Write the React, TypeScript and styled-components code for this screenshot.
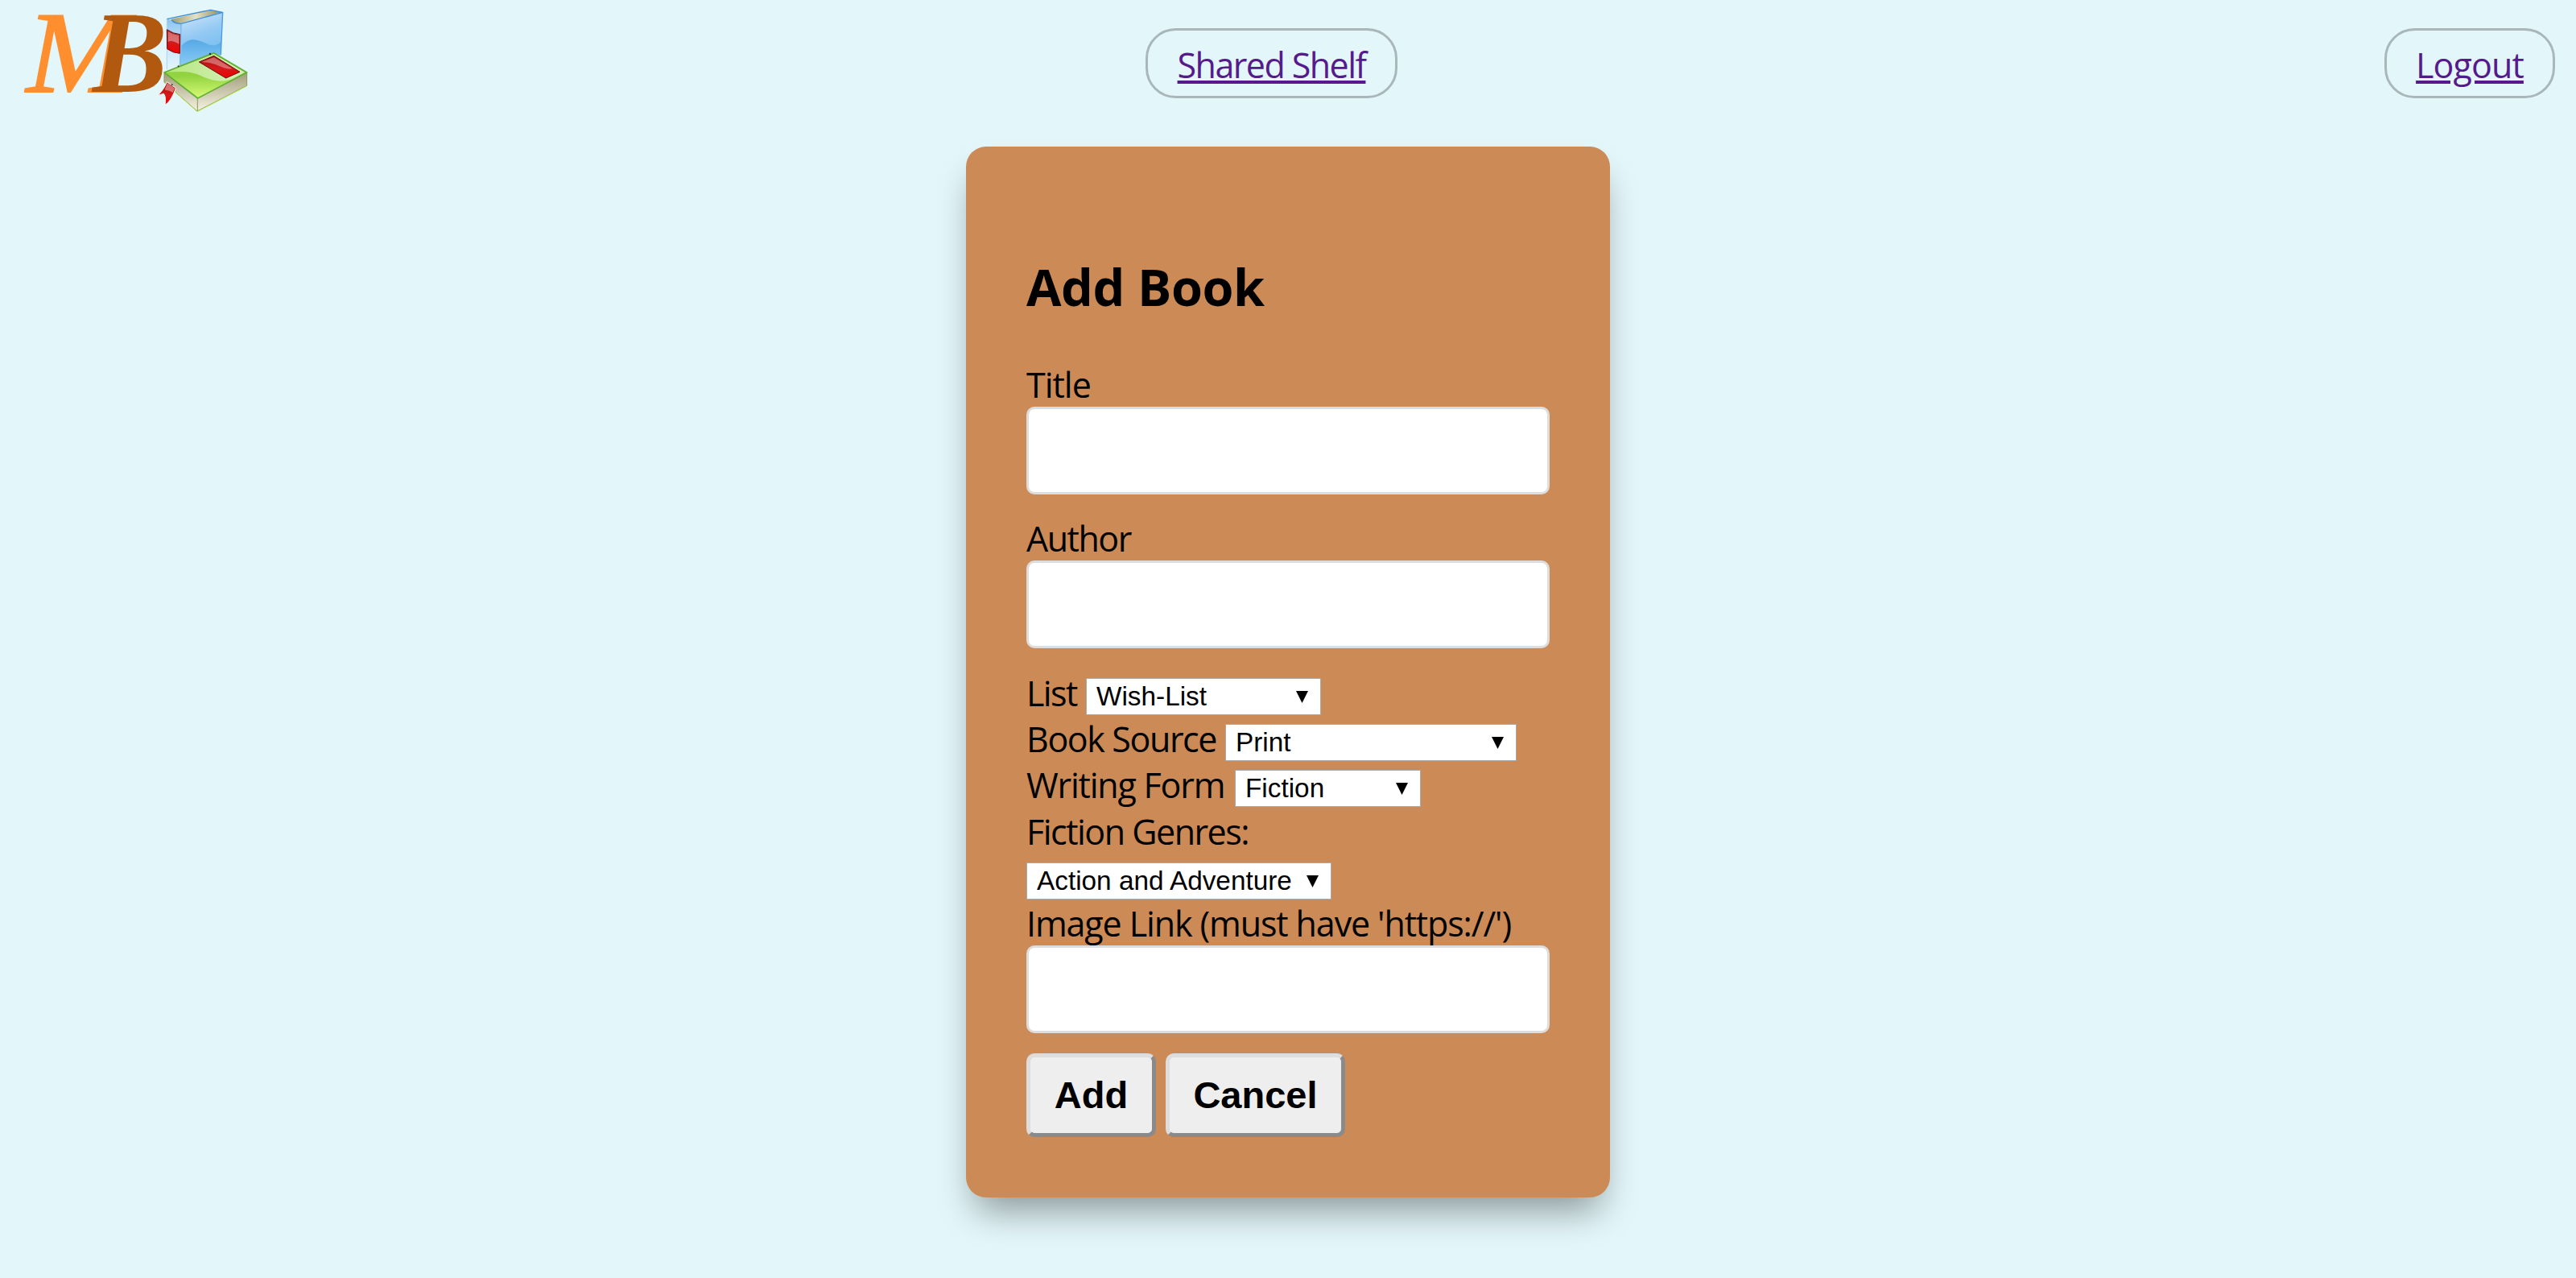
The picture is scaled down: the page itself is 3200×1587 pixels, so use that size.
import React from "react";
import styled, { createGlobalStyle } from "styled-components";

const GlobalStyle = createGlobalStyle`
  body {
    margin: 0;
    background: #e3f6fa;
    font-family: "Open Sans", "Noto Sans", sans-serif;
    color: #000;
  }
  *, *::before, *::after { box-sizing: border-box; }
`;

const Page = styled.div`
  min-height: 1587px;
  overflow: hidden;
`;

const Header = styled.header`
  display: flex;
  justify-content: space-between;
  align-items: flex-start;
  height: 182px;
  padding-right: 26px;
`;

const Brand = styled.div`
  width: 197px;
  height: 160px;
`;

const LogoArt = styled.svg`
  display: block;
  width: 340px;
  height: 160px;
`;

const NavLink = styled.a<{ $width: number; $track: number }>`
  display: flex;
  justify-content: center;
  width: ${(p) => p.$width}px;
  height: 87px;
  margin-top: 35px;
  border: 3px solid #a9b7bb;
  border-radius: 37.5px;
  color: #551a8b;
  font-size: 43px;
  line-height: 85px;
  letter-spacing: ${(p) => p.$track}px;
  text-decoration: underline;
  text-decoration-thickness: 4px;
  text-underline-offset: 3px;
  white-space: nowrap;
`;

const Card = styled.form`
  width: 800px;
  height: 1305px;
  margin: 0 auto;
  padding: 75px;
  border-radius: 25px;
  background: #cb8a56;
  box-shadow: 0 27px 46px -12px rgba(0, 0, 0, 0.4);
`;

const Heading = styled.h1<{ $track: number }>`
  height: 191px;
  margin: 0;
  padding-top: 3px;
  font-size: 63px;
  font-weight: 700;
  line-height: 191px;
  letter-spacing: ${(p) => p.$track}px;
`;

const Label = styled.label<{ $track: number; $width?: number }>`
  display: block;
  flex: none;
  width: ${(p) => (p.$width ? `${p.$width}px` : "auto")};
  height: 57px;
  font-size: 43px;
  line-height: 60px;
  letter-spacing: ${(p) => p.$track}px;
  white-space: nowrap;
`;

const Row = styled.div`
  display: flex;
  align-items: flex-start;
  height: 57.2px;
`;

const TextInput = styled.input<{ $gap: number }>`
  display: block;
  width: 650px;
  height: 109px;
  margin: 0 0 ${(p) => p.$gap}px;
  padding: 0 25px;
  border: 3px solid #ddd;
  border-radius: 10px;
  background: #fff;
  font: 40px "Liberation Sans", sans-serif;
`;

const SelectBox = styled.div<{ $width: number }>`
  position: relative;
  width: ${(p) => p.$width}px;
  height: 46px;
  margin-top: 11px;
`;

const NativeSelect = styled.select`
  appearance: none;
  display: block;
  width: 100%;
  height: 46px;
  margin: 0;
  padding: 0 0 0 12px;
  border: 1px solid #a9a9a9;
  border-radius: 0;
  background: #fff;
  color: #000;
  font: 33.33px/44px "Liberation Sans", Arial, sans-serif;
`;

const Arrow = styled.svg`
  position: absolute;
  right: 16px;
  top: 16px;
  width: 15px;
  height: 15px;
  pointer-events: none;
`;

const Actions = styled.div`
  display: flex;
  gap: 12px;
`;

const Button = styled.button<{ $width: number }>`
  width: ${(p) => p.$width}px;
  height: 104px;
  padding: 0 0 2px;
  border-style: solid;
  border-width: 5px;
  border-color: #ddd #8a8a8a #8a8a8a #ddd;
  border-radius: 10px;
  background: #eee;
  color: #000;
  font: bold 47px "Liberation Sans", Arial, sans-serif;
`;

const Logo = () => (
  <LogoArt viewBox="0 0 1020 480">
    <defs>
      <linearGradient id="cover" x1="0" y1="0" x2="0.3" y2="1">
        <stop offset="0" stopColor="#d3e6fa" />
        <stop offset="0.5" stopColor="#93c9f3" />
        <stop offset="1" stopColor="#6fbcee" />
      </linearGradient>
      <linearGradient id="wave" x1="0" y1="0" x2="0" y2="1">
        <stop offset="0" stopColor="#55a8e6" />
        <stop offset="1" stopColor="#8ccdf6" />
      </linearGradient>
      <linearGradient id="spine" x1="0" y1="0" x2="0" y2="1">
        <stop offset="0" stopColor="#8cc4f0" />
        <stop offset="0.5" stopColor="#c9e4fa" />
        <stop offset="1" stopColor="#e4f5ff" />
      </linearGradient>
      <linearGradient id="paper" x1="0" y1="0" x2="1" y2="0">
        <stop offset="0" stopColor="#9c9a6c" />
        <stop offset="0.5" stopColor="#e4e0c4" />
        <stop offset="1" stopColor="#8f8c62" />
      </linearGradient>
      <linearGradient id="side" x1="0" y1="0" x2="0" y2="1">
        <stop offset="0" stopColor="#a29d78" />
        <stop offset="1" stopColor="#f4f2e4" />
      </linearGradient>
      <linearGradient id="green" x1="0" y1="0" x2="0" y2="1">
        <stop offset="0" stopColor="#8fd14c" />
        <stop offset="0.5" stopColor="#92d340" />
        <stop offset="1" stopColor="#d8fb78" />
      </linearGradient>
      <linearGradient id="shine" x1="0" y1="0" x2="1" y2="0">
        <stop offset="0" stopColor="#b5e77c" />
        <stop offset="1" stopColor="#d6f0bd" />
      </linearGradient>
      <linearGradient id="red" x1="0" y1="0" x2="0" y2="1">
        <stop offset="0" stopColor="#a80d0d" />
        <stop offset="0.55" stopColor="#d21a1a" />
        <stop offset="1" stopColor="#f40000" />
      </linearGradient>
    </defs>
    <text transform="translate(98 343) scale(1.08 1)" fontFamily="Liberation Serif" fontStyle="italic" fontSize="430" fill="#ff8f2e" stroke="#ff8f2e" strokeWidth="6">M</text>
    <text transform="translate(345 341) scale(0.97 1)" fontFamily="Liberation Serif" fontStyle="italic" fontWeight="700" fontSize="430" fill="#b1590f">B</text>

    <path d="M622 71L640 74Q655 88 675 87L671 245L622 262Z" fill="url(#spine)" />
    <path d="M675 87L830 46L823 207L797 197L671 247Z" fill="url(#cover)" />
    <path d="M677 170C715 125 755 160 785 168C805 172 817 163 825 152L823 207L797 197L673 246Z" fill="url(#wave)" />
    <path d="M636 72L785 38L824 46L672 86Q648 86 636 72Z" fill="url(#paper)" />
    <path d="M622 71L785 37L830 46L675 88Q650 88 640 75" fill="none" stroke="#3f8bd0" strokeWidth="4" strokeLinejoin="round" />
    <path d="M830 46L823 203" stroke="#4a9be2" strokeWidth="4" />
    <path d="M675 90L671 243" stroke="#7ebcf0" strokeWidth="5" />
    <path d="M622 71V258" stroke="#a9d4f2" strokeWidth="3" />
    <path d="M622 110Q645 126 671 128L670 199Q645 198 623 182Z" fill="url(#red)" stroke="#6b1010" strokeWidth="3" />
    <path d="M626 116Q646 129 667 131V164Q640 148 626 156Z" fill="#fff" opacity="0.38" />

    <path d="M612 272L737 366L735 413L612 307Z" fill="url(#side)" />
    <path d="M737 366L920 271V319L735 413Z" fill="url(#side)" />
    <path d="M612 272V307L735 414L920 319V271M736 367V413" fill="none" stroke="#8d9a4c" strokeWidth="3" />
    <path d="M614 309L735 416L920 321" fill="none" stroke="#bfe95f" strokeWidth="3" />
    <path d="M612 270L797 197L920 270L737 366Z" fill="url(#green)" />
    <path d="M618 269L797 201L912 269L866 294C820 312 780 297 748 282C708 262 665 267 618 269Z" fill="url(#shine)" />
    <path d="M612 270L797 197L920 270L737 366Z" fill="none" stroke="#5fae35" strokeWidth="5" strokeLinejoin="round" />
    <path d="M742 231L797 208L894 268L842 291Z" fill="url(#red)" stroke="#6b0d0d" strokeWidth="3" />
    <path d="M752 231L797 213L866 256C828 260 815 234 752 231Z" fill="#fff" opacity="0.35" />
    <path d="M622 305L655 328C647 352 635 378 615 391C617 374 618 360 610 349C603 351 596 354 589 355C602 341 615 324 622 305Z" fill="url(#red)" stroke="#fff" strokeWidth="3" />
    <path d="M624 309L651 329L643 345C632 334 622 341 614 333Z" fill="#fff" opacity="0.4" />
    <circle cx="783" cy="201" r="4" fill="#1e3a2a" />
    <circle cx="665" cy="247" r="3" fill="#1e3a2a" />
    <circle cx="641" cy="316" r="3" fill="#1e3a2a" />
  </LogoArt>
);

const Select = ({ id, value, width }: { id: string; value: string; width: number }) => (
  <SelectBox $width={width}>
    <NativeSelect id={id} defaultValue={value}>
      <option>{value}</option>
    </NativeSelect>
    <Arrow viewBox="0 0 15 15">
      <path d="M0 0H15L7.5 15Z" fill="#000" />
    </Arrow>
  </SelectBox>
);

export default function App() {
  return (
    <Page>
      <GlobalStyle />
      <Header>
        <Brand>
          <Logo />
        </Brand>
        <NavLink href="#shelf" $width={313} $track={-1.55}>Shared Shelf</NavLink>
        <NavLink href="#logout" $width={212} $track={-0.9}>Logout</NavLink>
      </Header>
      <Card>
        <Heading $track={-0.4}>Add Book</Heading>
        <Label htmlFor="title" $track={-1}>Title</Label>
        <TextInput id="title" $gap={25} />
        <Label htmlFor="author" $track={-1.5}>Author</Label>
        <TextInput id="author" $gap={26} />
        <Row>
          <Label htmlFor="list" $track={-1.6} $width={74}>List</Label>
          <Select id="list" value="Wish-List" width={292} />
        </Row>
        <Row>
          <Label htmlFor="source" $track={-1.4} $width={247}>Book Source</Label>
          <Select id="source" value="Print" width={362} />
        </Row>
        <Row>
          <Label htmlFor="form" $track={-1.2} $width={259}>Writing Form</Label>
          <Select id="form" value="Fiction" width={231} />
        </Row>
        <Row>
          <Label htmlFor="genre" $track={-1.5}>Fiction Genres:</Label>
        </Row>
        <Row>
          <Select id="genre" value="Action and Adventure" width={379} />
        </Row>
        <Row>
          <Label htmlFor="image" $track={-1.12}>Image Link (must have 'https://')</Label>
        </Row>
        <TextInput id="image" $gap={25} />
        <Actions>
          <Button type="button" $width={161}>Add</Button>
          <Button type="button" $width={223}>Cancel</Button>
        </Actions>
      </Card>
    </Page>
  );
}
